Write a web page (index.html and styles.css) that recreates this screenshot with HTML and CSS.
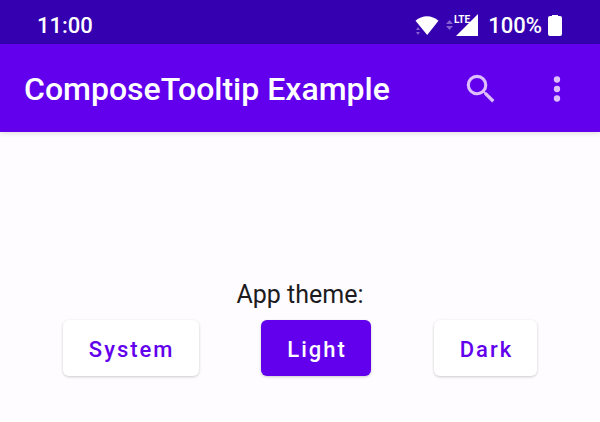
FILE: index.html
```html
<!DOCTYPE html>
<html lang="en">
<head>
<meta charset="utf-8">
<meta name="viewport" content="width=device-width, initial-scale=1">
<title>ComposeTooltip Example</title>
<link rel="stylesheet" href="styles.css">
</head>
<body>
<div class="status-bar">
  <span>11:00</span>
  <div class="status-icons">
    <svg class="wifi" width="26" height="24" viewBox="0 0 26 24" aria-hidden="true">
      <path fill="#fff" d="M1.500 7.800C8 1.800 18 1.800 24.500 7.800L13.200 22Z"/>
      <path class="faint" d="M2 17l2-3 2 3zM2 19l2 3 2-3z"/>
    </svg>
    <svg class="signal" width="32" height="24" viewBox="0 0 32 24" aria-hidden="true">
      <path class="faint" d="M0 11l3.500-4 3.500 4zM0 13l3.500 4 3.500-4z"/>
      <path fill="#fff" d="M10 23L32 1V23Z"/>
      <text class="lte" x="8" y="10">LTE</text>
    </svg>
    <span class="percent">100%</span>
    <svg width="16" height="24" viewBox="0 0 16 24" aria-hidden="true">
      <path fill="#fff" d="M5 2h6v1h2q2 0 2 2v16q0 2-2 2H3q-2 0-2-2V5q0-2 2-2h2z"/>
    </svg>
  </div>
</div>
<header class="app-bar">
  <h1>ComposeTooltip Example</h1>
  <button class="icon-button" type="button" aria-label="Search">
    <svg width="38" height="38" viewBox="0 0 24 24" aria-hidden="true">
      <path d="M15.500 14h-.79l-.28-.27A6.470 6.470 0 0 0 16 9.500 6.500 6.500 0 1 0 9.500 16c1.610 0 3.090-.59 4.230-1.570l.27.28v.79l5 4.990L20.490 19l-4.990-5zm-6 0C7.010 14 5 11.990 5 9.500S7.010 5 9.500 5 14 7.010 14 9.500 11.990 14 9.500 14z"/>
    </svg>
  </button>
  <button class="icon-button" type="button" aria-label="More options">
    <svg width="38" height="38" viewBox="0 0 24 24" aria-hidden="true">
      <circle cx="12" cy="6" r="2"/><circle cx="12" cy="12" r="2"/><circle cx="12" cy="18" r="2"/>
    </svg>
  </button>
</header>
<main>
  <p id="theme-label">App theme:</p>
  <div class="themes" role="group" aria-labelledby="theme-label">
    <button class="theme" type="button">System</button>
    <button class="theme selected" type="button" aria-pressed="true">Light</button>
    <button class="theme" type="button">Dark</button>
  </div>
</main>
</body>
</html>
```
FILE: styles.css
```css
* {
  box-sizing: border-box;
}

body {
  margin: 0;
  background: #fefcff;
  color: #1d1b20;
  font-family: Roboto, "Liberation Sans", sans-serif;
}

.status-bar {
  display: flex;
  align-items: center;
  justify-content: space-between;
  height: 44px;
  padding: 6px 37px 0;
  background: #3400b0;
  color: #fff;
  font-size: 22px;
  font-weight: 500;
}

.status-icons {
  display: flex;
  align-items: center;
}

.signal {
  margin-left: 6px;
}

.percent {
  margin: 0 5px 0 10px;
}

.faint {
  fill: #8660d0;
}

.lte {
  fill: #fff;
  font-family: "Liberation Sans Narrow", Roboto, sans-serif;
  font-size: 10px;
  font-weight: 700;
}

.app-bar {
  display: flex;
  align-items: center;
  height: 88px;
  padding: 2px 5px 0 24px;
  background: #6200ee;
  box-shadow: 0 1px 5px rgba(0, 0, 0, 0.14);
  color: #fff;
}

h1 {
  flex: 1;
  margin: 0;
  font-size: 32px;
  font-weight: 500;
}

.icon-button {
  display: grid;
  place-items: center;
  width: 76px;
  height: 76px;
  padding: 0;
  border: 0;
  background: none;
}

.icon-button svg {
  fill: #dfbffb;
}

main {
  padding: 144px 0 46px;
}

p {
  margin: 0;
  font-size: 25px;
  line-height: 38px;
  text-align: center;
}

.themes {
  display: flex;
  justify-content: space-evenly;
  margin-top: 6px;
}

.theme {
  height: 56px;
  padding: 2px 24px 0 26px;
  border: 0;
  border-radius: 6px;
  background: #fff;
  box-shadow: 0 1px 3px rgba(0, 0, 0, 0.2);
  color: #6200ee;
  font-family: inherit;
  font-size: 22px;
  font-weight: 500;
  letter-spacing: 2px;
}

.selected {
  background: #6200ee;
  color: #fff;
}
```
